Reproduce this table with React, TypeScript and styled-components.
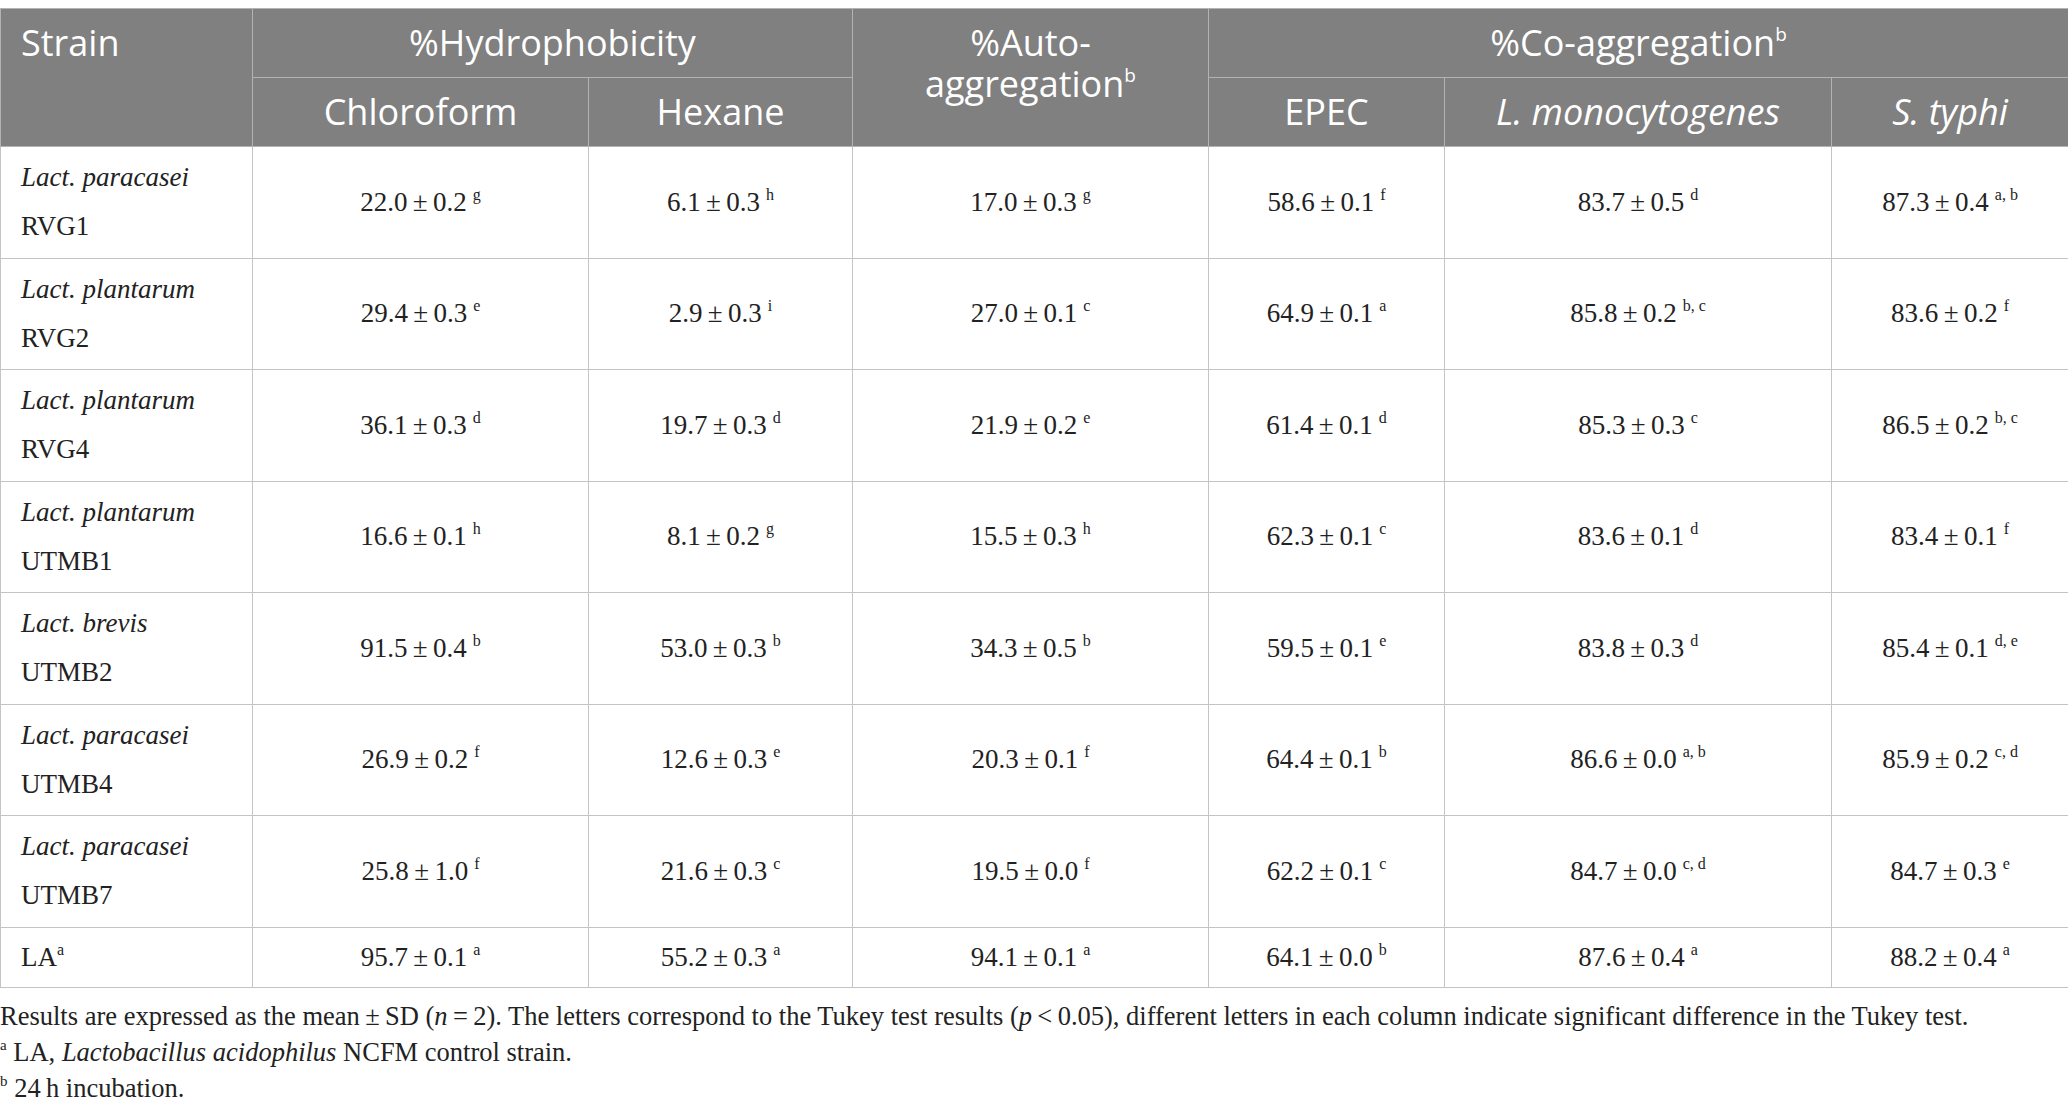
import styled, { createGlobalStyle } from "styled-components";

type Value = [string, string];

type Row = {
  species?: string;
  strain: string;
  strainSup?: string;
  values: Value[];
};

// mean, sd, Tukey letter(s)
const toValues = (list: string[][]): Value[] =>
  list.map(([m, sd, l]) => [`${m}\u2009±\u2009${sd}`, l]);

const rows: Row[] = [
  {
    species: "Lact. paracasei",
    strain: "RVG1",
    values: toValues([
      ["22.0", "0.2", "g"],
      ["6.1", "0.3", "h"],
      ["17.0", "0.3", "g"],
      ["58.6", "0.1", "f"],
      ["83.7", "0.5", "d"],
      ["87.3", "0.4", "a, b"],
    ]),
  },
  {
    species: "Lact. plantarum",
    strain: "RVG2",
    values: toValues([
      ["29.4", "0.3", "e"],
      ["2.9", "0.3", "i"],
      ["27.0", "0.1", "c"],
      ["64.9", "0.1", "a"],
      ["85.8", "0.2", "b, c"],
      ["83.6", "0.2", "f"],
    ]),
  },
  {
    species: "Lact. plantarum",
    strain: "RVG4",
    values: toValues([
      ["36.1", "0.3", "d"],
      ["19.7", "0.3", "d"],
      ["21.9", "0.2", "e"],
      ["61.4", "0.1", "d"],
      ["85.3", "0.3", "c"],
      ["86.5", "0.2", "b, c"],
    ]),
  },
  {
    species: "Lact. plantarum",
    strain: "UTMB1",
    values: toValues([
      ["16.6", "0.1", "h"],
      ["8.1", "0.2", "g"],
      ["15.5", "0.3", "h"],
      ["62.3", "0.1", "c"],
      ["83.6", "0.1", "d"],
      ["83.4", "0.1", "f"],
    ]),
  },
  {
    species: "Lact. brevis",
    strain: "UTMB2",
    values: toValues([
      ["91.5", "0.4", "b"],
      ["53.0", "0.3", "b"],
      ["34.3", "0.5", "b"],
      ["59.5", "0.1", "e"],
      ["83.8", "0.3", "d"],
      ["85.4", "0.1", "d, e"],
    ]),
  },
  {
    species: "Lact. paracasei",
    strain: "UTMB4",
    values: toValues([
      ["26.9", "0.2", "f"],
      ["12.6", "0.3", "e"],
      ["20.3", "0.1", "f"],
      ["64.4", "0.1", "b"],
      ["86.6", "0.0", "a, b"],
      ["85.9", "0.2", "c, d"],
    ]),
  },
  {
    species: "Lact. paracasei",
    strain: "UTMB7",
    values: toValues([
      ["25.8", "1.0", "f"],
      ["21.6", "0.3", "c"],
      ["19.5", "0.0", "f"],
      ["62.2", "0.1", "c"],
      ["84.7", "0.0", "c, d"],
      ["84.7", "0.3", "e"],
    ]),
  },
  {
    strain: "LA",
    strainSup: "a",
    values: toValues([
      ["95.7", "0.1", "a"],
      ["55.2", "0.3", "a"],
      ["94.1", "0.1", "a"],
      ["64.1", "0.0", "b"],
      ["87.6", "0.4", "a"],
      ["88.2", "0.4", "a"],
    ]),
  },
];

const colWidths = [252, 336, 264, 356, 236, 387, 237];

const App = () => {
  return (
    <Page>
      <GlobalStyle />
      <Table>
        <colgroup>
          {colWidths.map((w, i) => (
            <col key={i} style={{ width: w }} />
          ))}
        </colgroup>
        <thead>
          <tr>
            <HeadCell rowSpan={2} $align="left" $top>
              Strain
            </HeadCell>
            <HeadCell colSpan={2}>%Hydrophobicity</HeadCell>
            <HeadCell rowSpan={2} $top>
              <HeadLine>%Auto-</HeadLine>
              <HeadLine>
                aggregation<HeadSup>b</HeadSup>
              </HeadLine>
            </HeadCell>
            <HeadCell colSpan={3}>
              %Co-aggregation<HeadSup>b</HeadSup>
            </HeadCell>
          </tr>
          <tr>
            <HeadCell>Chloroform</HeadCell>
            <HeadCell>Hexane</HeadCell>
            <HeadCell>EPEC</HeadCell>
            <HeadCell>
              <em>L. monocytogenes</em>
            </HeadCell>
            <HeadCell>
              <em>S. typhi</em>
            </HeadCell>
          </tr>
        </thead>
        <tbody>
          {rows.map((row) => {
            const compact = !row.species;
            return (
              <tr key={row.strain}>
                <StrainCell $compact={compact}>
                  {row.species && (
                    <>
                      <em>{row.species}</em>
                      <br />
                    </>
                  )}
                  {row.strain}
                  {row.strainSup && <StrainSup>{row.strainSup}</StrainSup>}
                </StrainCell>
                {row.values.map(([text, letter], i) => (
                  <ValueCell key={i} $compact={compact}>
                    {text}
                    <Letter>{letter}</Letter>
                  </ValueCell>
                ))}
              </tr>
            );
          })}
        </tbody>
      </Table>
      <Notes>
        <Note>
          Results are expressed as the mean{"\u2009"}±{"\u2009"}SD (<em>n</em>
          {"\u2009"}={"\u2009"}2). The letters correspond to the Tukey test
          results (<em>p</em>
          {"\u2009"}&lt;{"\u2009"}0.05), different letters in each column
          indicate significant difference in the Tukey test.
        </Note>
        <Note>
          <NoteSup>a</NoteSup> LA, <em>Lactobacillus acidophilus</em> NCFM
          control strain.
        </Note>
        <Note>
          <NoteSup>b</NoteSup> 24{"\u2009"}h incubation.
        </Note>
      </Notes>
    </Page>
  );
};

export default App;

const GlobalStyle = createGlobalStyle`
  html, body {
    margin: 0;
    padding: 0;
    background: #ffffff;
  }
`;

const Page = styled.div`
  width: 2068px;
  padding-top: 8px;
  font-family: "Liberation Serif", "Times New Roman", serif;
  color: #222222;
`;

const Table = styled.table`
  width: 100%;
  table-layout: fixed;
  border-collapse: collapse;
  border: 1px solid #bdbdbd;
`;

const HeadCell = styled.th<{ $align?: "left" | "center"; $top?: boolean }>`
  background: #7f807f;
  color: #ffffff;
  font-family: "Open Sans", "Noto Sans", sans-serif;
  font-weight: 400;
  font-size: 36px;
  line-height: 41px;
  padding: 13px 20px 14px;
  text-align: ${(p) => p.$align ?? "center"};
  vertical-align: ${(p) => (p.$top ? "top" : "middle")};
  border: 1px solid #b3b3b3;
  white-space: nowrap;

  em {
    font-style: italic;
  }
`;

const HeadLine = styled.div`
  height: 41px;
  overflow: visible;
`;

const HeadSup = styled.sup`
  font-size: 19px;
  line-height: 0;
  vertical-align: 15px;
`;

const StrainCell = styled.td<{ $compact?: boolean }>`
  border: 1px solid #c4c4c4;
  padding: ${(p) => (p.$compact ? "5px 20px" : "6px 20px 6.5px")};
  font-size: 27px;
  line-height: 49px;
  text-align: left;
  vertical-align: middle;
  white-space: nowrap;
`;

const StrainSup = styled.sup`
  font-size: 16px;
  line-height: 0;
  vertical-align: 11px;
`;

const ValueCell = styled.td<{ $compact?: boolean }>`
  border: 1px solid #c4c4c4;
  padding: ${(p) => (p.$compact ? "5px 10px" : "6px 10px 6.5px")};
  font-size: 27px;
  line-height: 49px;
  text-align: center;
  vertical-align: middle;
  white-space: nowrap;
`;

const Letter = styled.sup`
  font-size: 16px;
  line-height: 0;
  vertical-align: 11px;
  margin-left: 6px;
`;

const Notes = styled.div`
  margin-top: 10px;
  font-size: 26.5px;
  line-height: 36px;
  color: #222222;
`;

const Note = styled.p`
  margin: 0;
`;

const NoteSup = styled.sup`
  font-size: 15px;
  line-height: 0;
  vertical-align: 11px;
`;
